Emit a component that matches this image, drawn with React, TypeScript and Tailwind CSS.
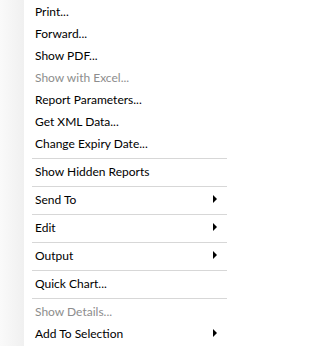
type Entry =
  | { kind: 'item'; label: string; disabled?: boolean; submenu?: boolean }
  | { kind: 'sep' };

const entries: Entry[] = [
  { kind: 'item', label: 'Print...' },
  { kind: 'item', label: 'Forward...' },
  { kind: 'item', label: 'Show PDF...' },
  { kind: 'item', label: 'Show with Excel...', disabled: true },
  { kind: 'item', label: 'Report Parameters...' },
  { kind: 'item', label: 'Get XML Data...' },
  { kind: 'item', label: 'Change Expiry Date...' },
  { kind: 'sep' },
  { kind: 'item', label: 'Show Hidden Reports' },
  { kind: 'sep' },
  { kind: 'item', label: 'Send To', submenu: true },
  { kind: 'sep' },
  { kind: 'item', label: 'Edit', submenu: true },
  { kind: 'sep' },
  { kind: 'item', label: 'Output', submenu: true },
  { kind: 'sep' },
  { kind: 'item', label: 'Quick Chart...' },
  { kind: 'sep' },
  { kind: 'item', label: 'Show Details...', disabled: true },
  { kind: 'item', label: 'Add To Selection', submenu: true },
];

function MenuRow({ label, disabled, submenu }: { label: string; disabled?: boolean; submenu?: boolean }) {
  return (
    <div
      className={`flex h-[22px] items-center justify-between pl-[11px] pr-[10px] text-[12px] ${
        disabled ? 'text-[#8d8d8d]' : 'text-black'
      }`}
    >
      <span className="whitespace-nowrap pt-[1px]">{label}</span>
      {submenu && (
        <span className="h-0 w-0 border-y-[4px] border-l-[4px] border-y-transparent border-l-black" aria-hidden />
      )}
    </div>
  );
}

export default function App() {
  return (
    <div className="flex h-[346px] w-[227px] bg-white" style={{ fontFamily: 'Lato, "Liberation Sans", sans-serif' }}>
      <div className="w-[24px] shrink-0 bg-gradient-to-r from-[#fafafa] to-[#f0f0f0]" />
      <div className="flex flex-1 flex-col">
        {entries.map((e, i) =>
          e.kind === 'sep' ? (
            <div key={i} className="pb-[1px] pl-[8px] pt-[4px]">
              <div className="h-px bg-[#d7d7d7]" />
            </div>
          ) : (
            <MenuRow key={i} label={e.label} disabled={e.disabled} submenu={e.submenu} />
          )
        )}
      </div>
    </div>
  );
}
